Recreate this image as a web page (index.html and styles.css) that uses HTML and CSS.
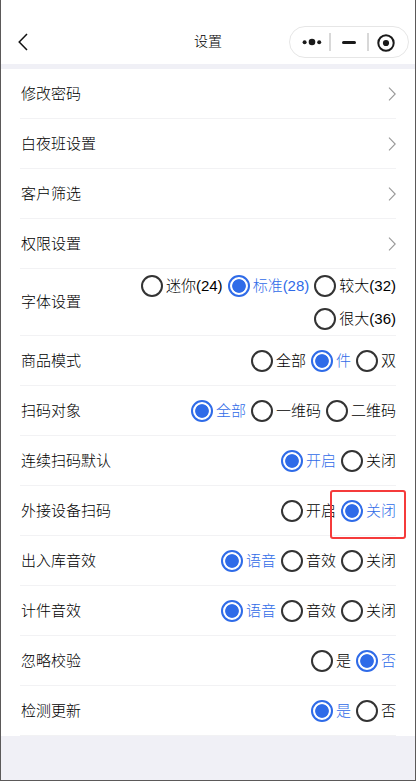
FILE: index.html
```html
<!DOCTYPE html>
<html lang="zh-CN">
<head>
<meta charset="utf-8">
<title>设置</title>
<link rel="stylesheet" href="styles.css">
</head>
<body>
<div class="phone">
  <header class="nav">
    <svg class="back" width="11" height="18" viewBox="0 0 11 18"><path d="M10 1L2.2 9L10 17"/></svg>
    <h1 class="title">设置</h1>
    <div class="capsule">
      <svg width="120" height="32" viewBox="0 0 120 32">
        <rect class="outline" x=".5" y=".5" width="119" height="31" rx="15.5"/>
        <circle cx="15.6" cy="16.2" r="2"/><circle cx="23" cy="16" r="3.3"/><circle cx="30.2" cy="16.2" r="2"/>
        <rect class="sep" x="40" y="7" width="2" height="18"/>
        <rect x="53" y="15" width="14" height="3" rx="1.5"/>
        <rect class="sep" x="78" y="7" width="2" height="18"/>
        <circle class="ring" cx="97" cy="17" r="7.7"/><circle cx="97" cy="17" r="3.1"/>
      </svg>
    </div>
  </header>
  <main class="list">
    <div class="row"><span class="label">修改密码</span><svg class="arrow" width="8" height="14" viewBox="0 0 8 14"><path d="M1 .7L7.2 7L1 13.3"/></svg></div>
    <div class="row"><span class="label">白夜班设置</span><svg class="arrow" width="8" height="14" viewBox="0 0 8 14"><path d="M1 .7L7.2 7L1 13.3"/></svg></div>
    <div class="row"><span class="label">客户筛选</span><svg class="arrow" width="8" height="14" viewBox="0 0 8 14"><path d="M1 .7L7.2 7L1 13.3"/></svg></div>
    <div class="row"><span class="label">权限设置</span><svg class="arrow" width="8" height="14" viewBox="0 0 8 14"><path d="M1 .7L7.2 7L1 13.3"/></svg></div>
    <div class="row tall"><span class="label">字体设置</span><div class="options"><span class="opt"><i></i>迷你(24)</span><span class="opt on"><i></i>标准(28)</span><span class="opt"><i></i>较大(32)</span><span class="opt"><i></i>很大(36)</span></div></div>
    <div class="row"><span class="label">商品模式</span><div class="options"><span class="opt"><i></i>全部</span><span class="opt on"><i></i>件</span><span class="opt"><i></i>双</span></div></div>
    <div class="row"><span class="label">扫码对象</span><div class="options"><span class="opt on"><i></i>全部</span><span class="opt"><i></i>一维码</span><span class="opt"><i></i>二维码</span></div></div>
    <div class="row"><span class="label">连续扫码默认</span><div class="options"><span class="opt on"><i></i>开启</span><span class="opt"><i></i>关闭</span></div></div>
    <div class="row"><span class="label">外接设备扫码</span><div class="options"><span class="opt"><i></i>开启</span><span class="opt on"><i></i>关闭</span></div><div class="marker"></div></div>
    <div class="row"><span class="label">出入库音效</span><div class="options"><span class="opt on"><i></i>语音</span><span class="opt"><i></i>音效</span><span class="opt"><i></i>关闭</span></div></div>
    <div class="row"><span class="label">计件音效</span><div class="options"><span class="opt on"><i></i>语音</span><span class="opt"><i></i>音效</span><span class="opt"><i></i>关闭</span></div></div>
    <div class="row"><span class="label">忽略校验</span><div class="options"><span class="opt"><i></i>是</span><span class="opt on"><i></i>否</span></div></div>
    <div class="row"><span class="label">检测更新</span><div class="options"><span class="opt on"><i></i>是</span><span class="opt"><i></i>否</span></div></div>
  </main>
</div>
</body>
</html>
```
FILE: styles.css
```css
* { box-sizing: border-box; }
body {
  margin: 0;
  font: 300 15px/20px "Liberation Sans", "Noto Sans CJK SC", sans-serif;
  color: #000;
}
.phone {
  height: 781px;
  border: 1px solid #5b5959;
  border-top: 0;
  background: #f0f0f6;
}
.nav {
  height: 64px;
  padding: 26px 6px 0 16px;
  display: grid;
  grid-template-columns: 120px 1fr 120px;
  background: #fff;
}
.back { margin-top: 7px; fill: none; stroke: #111; stroke-width: 1.5; }
.title {
  margin: 0;
  padding-right: 10px;
  font-size: 14px;
  font-weight: 300;
  line-height: 31px;
  text-align: center;
}
.capsule { height: 32px; }
.capsule svg { display: block; fill: #1a1a1a; }
.capsule .outline { fill: #fff; stroke: #e6e6e6; }
.capsule .sep { fill: #d8d8d8; }
.capsule .ring { fill: none; stroke: #1a1a1a; stroke-width: 2; }
.list { margin-top: 5px; padding: 0 19px; background: #fff; }
.row {
  position: relative;
  height: 50px;
  display: flex;
  align-items: center;
  justify-content: space-between;
  border-bottom: 1px solid #f2f2f4;
}
.row.tall { height: 67px; }
.label { padding-left: 1px; }
.arrow { fill: none; stroke: #999; stroke-width: 1.1; }
.options {
  width: 270px;
  display: flex;
  flex-wrap: wrap;
  justify-content: flex-end;
  gap: 11px 5px;
}
.opt { height: 22px; display: flex; align-items: center; gap: 3px; white-space: nowrap; }
.opt i {
  width: 22px;
  height: 22px;
  border: 2px solid #333;
  border-radius: 50%;
}
.opt.on { color: #2f6be8; }
.opt.on i {
  border-color: #2f6be8;
  background: radial-gradient(circle, #2f6be8 6.4px, #fff 7.2px);
}
.marker {
  position: absolute;
  right: -10px;
  top: 4px;
  z-index: 1;
  width: 76px;
  height: 49px;
  border: 2px solid #f53b3b;
  border-radius: 3px;
}
```
